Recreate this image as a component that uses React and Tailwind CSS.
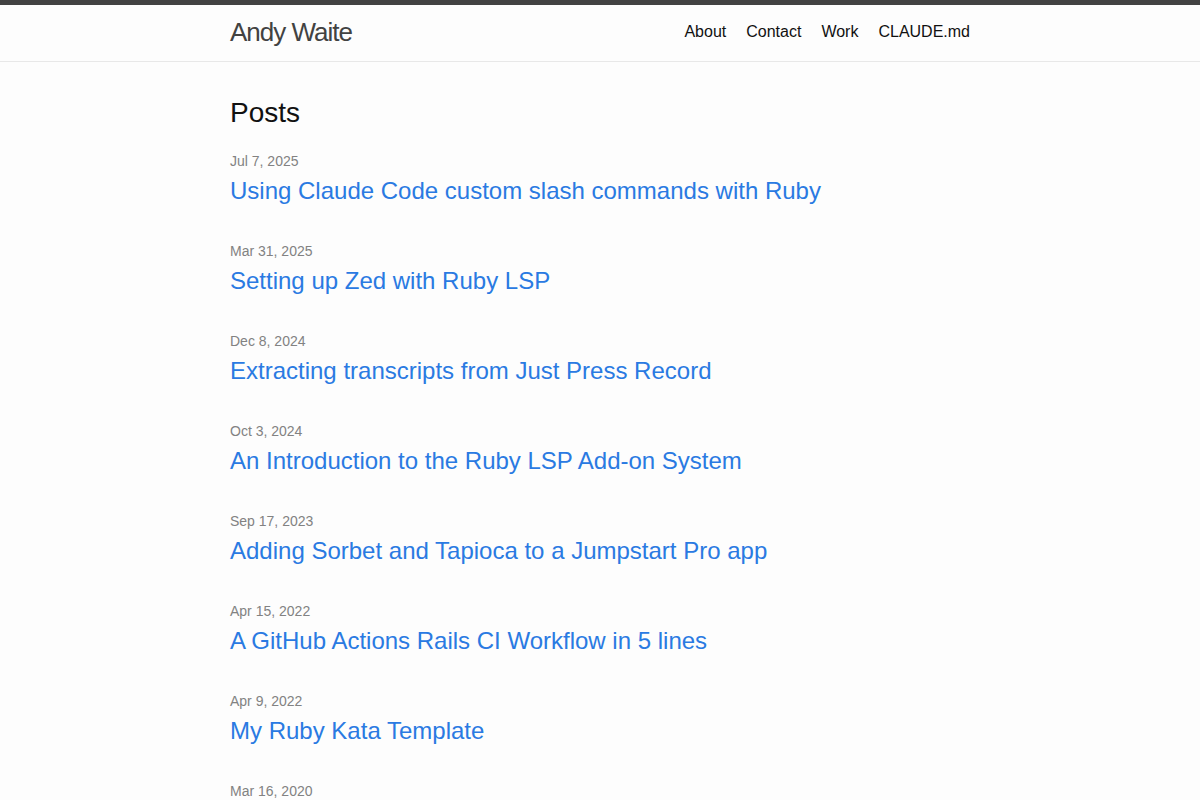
import React from "react";

const posts = [
  { date: "Jul 7, 2025", title: "Using Claude Code custom slash commands with Ruby" },
  { date: "Mar 31, 2025", title: "Setting up Zed with Ruby LSP" },
  { date: "Dec 8, 2024", title: "Extracting transcripts from Just Press Record" },
  { date: "Oct 3, 2024", title: "An Introduction to the Ruby LSP Add-on System" },
  { date: "Sep 17, 2023", title: "Adding Sorbet and Tapioca to a Jumpstart Pro app" },
  { date: "Apr 15, 2022", title: "A GitHub Actions Rails CI Workflow in 5 lines" },
  { date: "Apr 9, 2022", title: "My Ruby Kata Template" },
  { date: "Mar 16, 2020", title: "Testing Rails apps with RSpec" },
];

const nav = ["About", "Contact", "Work", "CLAUDE.md"];

export default function App() {
  return (
    <div className="min-h-screen bg-[#fdfdfd] text-[#111] text-[16px] leading-[1.5] font-['Liberation_Sans',Arial,sans-serif]">
      <header className="border-t-[5px] border-t-[#424242] border-b border-b-[#e8e8e8]">
        <div className="max-w-[800px] h-[56px] mx-auto px-[30px] flex items-start justify-between">
          <a href="#" className="text-[26px] font-light leading-[54px] tracking-[-1px] text-[#424242]">
            Andy Waite
          </a>
          <nav className="flex gap-[20px] leading-[54px]">
            {nav.map((n) => (
              <a key={n} href="#" className="text-[#111]">
                {n}
              </a>
            ))}
          </nav>
        </div>
      </header>
      <main className="py-[30px]">
        <div className="max-w-[800px] mx-auto px-[30px]">
          <h2 className="text-[28px] leading-[1.5] mb-[15px] font-normal">Posts</h2>
          <ul>
            {posts.map((p) => (
              <li key={p.title} className="mb-[30px]">
                <span className="text-[14px] text-[#828282]">{p.date}</span>
                <h3 className="text-[24px] leading-[1.5] font-normal">
                  <a href="#" className="text-[#2a7ae2]">
                    {p.title}
                  </a>
                </h3>
              </li>
            ))}
          </ul>
        </div>
      </main>
    </div>
  );
}
